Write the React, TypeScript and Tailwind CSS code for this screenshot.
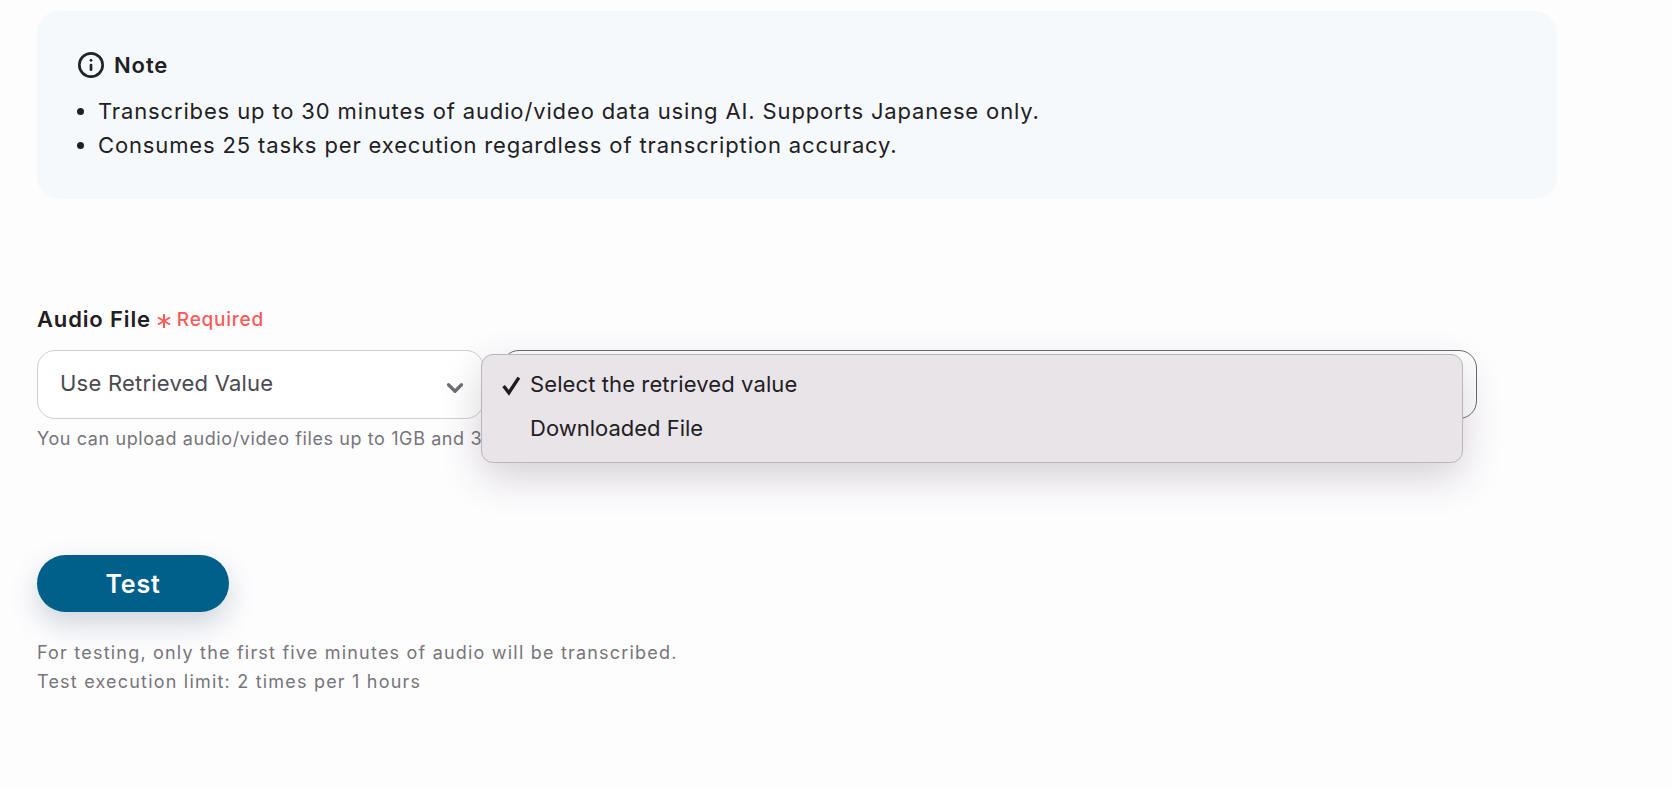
import { ChevronDown, Info } from "lucide-react";

const notes = [
  "Transcribes up to 30 minutes of audio/video data using AI. Supports Japanese only.",
  "Consumes 25 tasks per execution regardless of transcription accuracy.",
];

export default function App() {
  return (
    <div className="w-[1672px] h-[788px] overflow-hidden bg-[#fefdfe] pt-[11px] pl-[37px] font-['Inter',sans-serif] text-[#1f2024]">
      <div className="w-[1520px] h-[188px] rounded-[22px] bg-[#f5f9fc] pt-[38px] pl-[40px]">
        <div className="flex items-center gap-[9px]">
          <Info className="w-[28px] h-[28px] text-[#1f2329]" strokeWidth={2.3} />
          <span className="text-[22px] leading-[32px] font-semibold tracking-[0.9px]">Note</span>
        </div>
        <ul className="mt-[13px] list-disc pl-[21px] text-[22px] leading-[34px] tracking-[0.86px]">
          {notes.map((note) => (
            <li key={note}>{note}</li>
          ))}
        </ul>
      </div>

      <div className="mt-[105px] flex items-center h-[30px]">
        <span className="text-[22px] font-semibold tracking-[0.85px]">Audio File</span>
        <svg viewBox="0 0 16 16" className="ml-[5px] mt-[3px] w-[16px] h-[16px] text-[#fb5a5a]" fill="none" stroke="currentColor" strokeWidth="2">
          <path d="M8 1v14M2 4.5l12 7M2 11.5l12-7" />
        </svg>
        <span className="ml-[5px] mt-[3px] text-[#fb5a5a] text-[19px] font-medium tracking-[0.75px]">Required</span>
      </div>

      <div className="relative mt-[16px] w-[1440px] h-[69px] flex gap-[17px]">
        <div className="w-[447px] rounded-[18px] border border-[#cfcdd2] bg-white pb-[2px] pl-[22px] pr-[15px] flex items-center justify-between">
          <span className="text-[22px] text-[#4b4a50] tracking-[0.22px]">Use Retrieved Value</span>
          <ChevronDown className="w-[26px] h-[26px] mt-[9px] text-[#6f6e73]" strokeWidth={3} />
        </div>
        <div className="w-[976px] rounded-[18px] border border-[#6b6a70] bg-white" />

        <div className="absolute left-[444px] top-[4px] w-[982px] h-[109px] rounded-[12px] border border-[#bab6bb] bg-[#e8e4e8] shadow-[0_14px_40px_rgba(40,30,50,0.2)] pt-[7px]">
          <div className="flex items-center h-[44px]">
            <svg viewBox="0 0 20 20" className="ml-[19px] w-[21px] h-[21px] mt-[3px] text-[#1d1c20]" fill="none" stroke="currentColor" strokeWidth="3.2">
              <path d="M2.5 10.5 L7.5 17 L17 2.5" />
            </svg>
            <span className="ml-[8px] text-[22px] tracking-[0.1px]">Select the retrieved value</span>
          </div>
          <div className="flex items-center h-[44px] pl-[48px] text-[22px]">Downloaded File</div>
        </div>
      </div>

      <p className="mt-[8px] text-[18px] leading-[24px] tracking-[0.6px] text-[#76757b]">You can upload audio/video files up to 1GB and 3</p>

      <button className="mt-[104px] block w-[192px] h-[57px] rounded-full bg-[#006089] pt-[3px] text-white text-[25px] font-semibold tracking-[0.8px] shadow-[0_12px_30px_rgba(0,50,80,0.2)]">
        Test
      </button>

      <p className="mt-[26px] text-[18px] leading-[29px] tracking-[1.2px] text-[#76757b]">
        For testing, only the first five minutes of audio will be transcribed.
        <br />
        Test execution limit: 2 times per 1 hours
      </p>
    </div>
  );
}
